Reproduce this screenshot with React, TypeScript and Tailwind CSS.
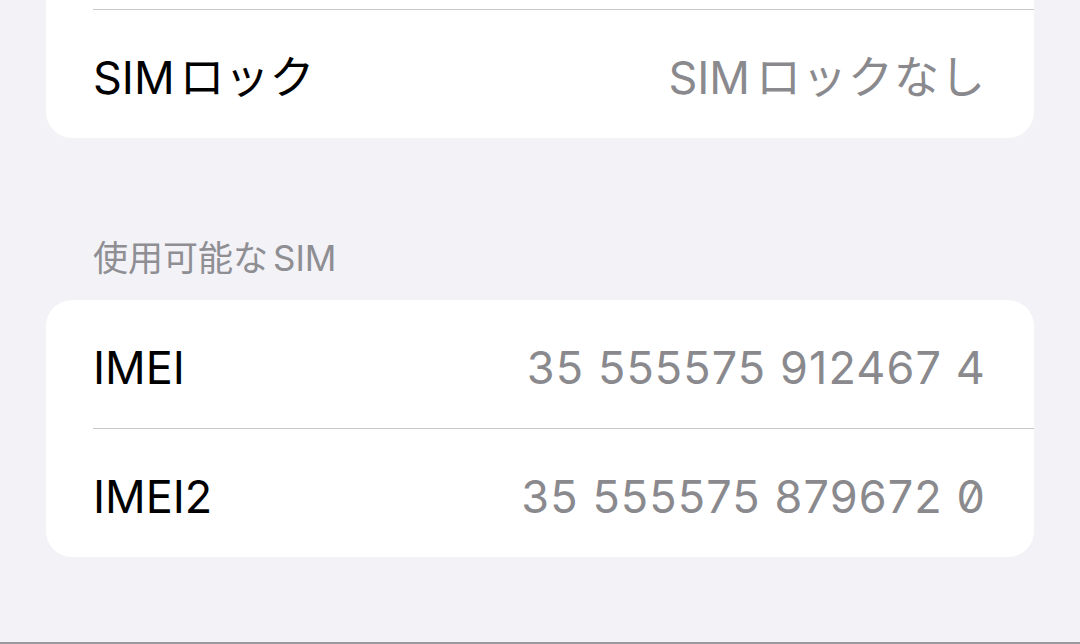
// Latin part and kana part sit a little apart, like the system font does
const Mixed = ({ latin, kana, gap }: { latin: string; kana: string; gap: string }) => (
  <>
    {latin}
    <span className={gap}>{kana}</span>
  </>
);

const Row = ({ label, value, mono }: { label: React.ReactNode; value: React.ReactNode; mono?: boolean }) => {
  return (
    <div className="flex h-[128px] items-center justify-between pl-[47px] pr-[48px] pt-[7px]">
      <span className="text-[45px] text-black">{label}</span>
      <span
        className={
          mono
            ? "text-[45px] tracking-[1.1px] text-[#8a8a8e] [font-feature-settings:'zero']"
            : "text-[45px] text-[#8a8a8e]"
        }
      >
        {value}
      </span>
    </div>
  );
};

const Divider = () => <div className="ml-[47px] h-px bg-[#c8c8cc]"></div>;

const App = () => {
  return (
    <div className="flex h-[644px] w-[1080px] flex-col overflow-hidden bg-[#f2f2f7] font-['Inter','Noto_Sans_CJK_JP',sans-serif] leading-none">
      {/* tail of the lock section */}
      <div className="mx-[46px] rounded-b-[26px] bg-white">
        <div className="h-[9px]"></div>
        <Divider />
        <Row
          label={<Mixed latin="SIM" kana="ロック" gap="ml-[5px]" />}
          value={<Mixed latin="SIM" kana="ロックなし" gap="ml-[6px] tracking-[1px]" />}
        />
      </div>

      <div className="flex h-[162px] items-end pb-[24px] pl-[93px]">
        <span className="text-[35px] text-[#8e8e93]">
          使用可能な<span className="ml-[5px]">SIM</span>
        </span>
      </div>

      <div className="mx-[46px] rounded-[26px] bg-white">
        <Row label="IMEI" value="35 555575 912467 4" mono />
        <Divider />
        <Row label="IMEI2" value="35 555575 879672 0" mono />
      </div>

      <div className="flex-1"></div>
      <div className="h-[2px] bg-[#9a9a9e]"></div>
    </div>
  );
};

export default App;
